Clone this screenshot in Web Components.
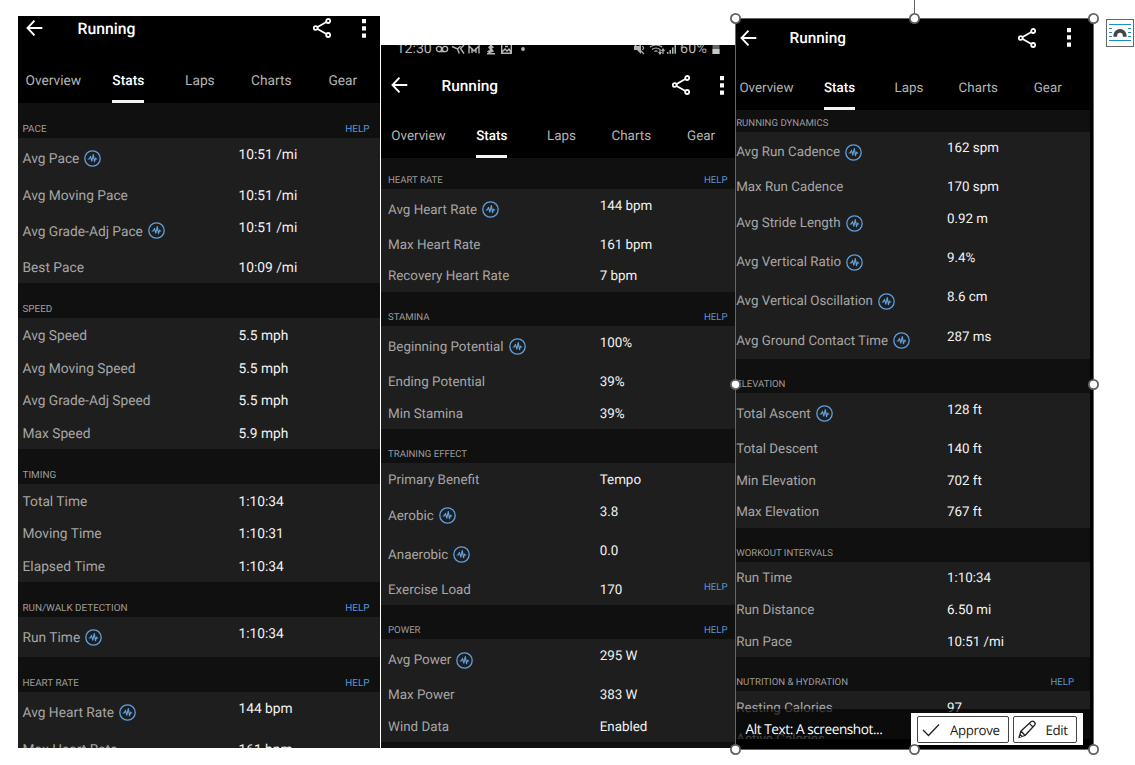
<!DOCTYPE html>
<html lang="en">
<head>
<meta charset="utf-8">
<title>Running stats</title>
<style>
body{margin:0;background:#fff;width:1135px;height:765px;overflow:hidden;font-family:Roboto,"Liberation Sans",sans-serif;text-rendering:geometricPrecision}
</style>
</head>
<body>
<document-page>
  <phone-shot class="a" style="--bar:24px;--tabs:63px;--pitch:71.5px;--tabpad:1.4px;--tb:12.5px;--dy:.9px;--pl:7.5px;--gap:35px;--dotgap:30.7px;--pr:14.5px;--lx:4.5px;--vx:220.5px;--help:10.5px;--fs:13.75px;--hs:9.9px;--plain:32.7px;--icon:40px;--head:35px;width:362px;height:732px;margin-top:16px">
    <stat-group label="PACE" help>
      <stat-row label="Avg Pace" value="10:51 /mi" tip></stat-row>
      <stat-row label="Avg Moving Pace" value="10:51 /mi"></stat-row>
      <stat-row label="Avg Grade-Adj Pace" value="10:51 /mi" tip></stat-row>
      <stat-row label="Best Pace" value="10:09 /mi"></stat-row>
    </stat-group>
    <stat-group label="SPEED">
      <stat-row label="Avg Speed" value="5.5 mph"></stat-row>
      <stat-row label="Avg Moving Speed" value="5.5 mph"></stat-row>
      <stat-row label="Avg Grade-Adj Speed" value="5.5 mph"></stat-row>
      <stat-row label="Max Speed" value="5.9 mph"></stat-row>
    </stat-group>
    <stat-group label="TIMING">
      <stat-row label="Total Time" value="1:10:34"></stat-row>
      <stat-row label="Moving Time" value="1:10:31"></stat-row>
      <stat-row label="Elapsed Time" value="1:10:34"></stat-row>
    </stat-group>
    <stat-group label="RUN/WALK DETECTION" help>
      <stat-row label="Run Time" value="1:10:34" tip></stat-row>
    </stat-group>
    <stat-group label="HEART RATE" help>
      <stat-row label="Avg Heart Rate" value="144 bpm" tip></stat-row>
      <stat-row label="Max Heart Rate" value="161 bpm"></stat-row>
    </stat-group>
  </phone-shot>
  <phone-shot class="b" style="--bar:30px;--tabs:58px;--pitch:69.8px;--tabpad:-1px;--tb:11.3px;--dy:1.3px;--pl:10px;--gap:33.5px;--dotgap:30px;--pr:11px;--lx:7px;--vx:218.7px;--help:7.5px;--fs:13.4px;--hs:9.6px;--plain:31.8px;--icon:39.2px;--head:34.3px;--first:1px;width:354px;height:703px;margin:45px 0 0 1px">
    <status-bar slot="status"></status-bar>
    <stat-group label="HEART RATE" help style="--head:31px">
      <stat-row label="Avg Heart Rate" value="144 bpm" tip></stat-row>
      <stat-row label="Max Heart Rate" value="161 bpm"></stat-row>
      <stat-row label="Recovery Heart Rate" value="7 bpm"></stat-row>
    </stat-group>
    <stat-group label="STAMINA" help>
      <stat-row label="Beginning Potential" value="100%" tip></stat-row>
      <stat-row label="Ending Potential" value="39%"></stat-row>
      <stat-row label="Min Stamina" value="39%"></stat-row>
    </stat-group>
    <stat-group label="TRAINING EFFECT">
      <stat-row label="Primary Benefit" value="Tempo"></stat-row>
      <stat-row label="Aerobic" value="3.8" tip></stat-row>
      <stat-row label="Anaerobic" value="0.0" tip></stat-row>
      <stat-row label="Exercise Load" value="170" help></stat-row>
    </stat-group>
    <stat-group label="POWER" help>
      <stat-row label="Avg Power" value="295 W" tip></stat-row>
      <stat-row label="Max Power" value="383 W"></stat-row>
      <stat-row label="Wind Data" value="Enabled"></stat-row>
    </stat-group>
  </phone-shot>
  <selection-frame>
    <phone-shot class="c" style="--bar:39px;--tabs:53px;--pitch:69.4px;--tabpad:10.6px;--tb:10.8px;--dy:1.1px;--pl:4.5px;--gap:33px;--dotgap:30.3px;--pr:22.3px;--lx:1.2px;--vx:212px;--help:16px;--fs:13.35px;--hs:9.6px;--plain:31.8px;--icon:39.1px;--head:34.1px;--edge:3px;--first:7px;width:358px;height:731px">
      <stat-group label="RUNNING DYNAMICS" style="--head:22px">
        <stat-row label="Avg Run Cadence" value="162 spm" tip></stat-row>
        <stat-row label="Max Run Cadence" value="170 spm"></stat-row>
        <stat-row label="Avg Stride Length" value="0.92 m" tip></stat-row>
        <stat-row label="Avg Vertical Ratio" value="9.4%" tip></stat-row>
        <stat-row label="Avg Vertical Oscillation" value="8.6 cm" tip></stat-row>
        <stat-row label="Avg Ground Contact Time" value="287 ms" tip></stat-row>
      </stat-group>
      <stat-group label="ELEVATION">
        <stat-row label="Total Ascent" value="128 ft" tip></stat-row>
        <stat-row label="Total Descent" value="140 ft"></stat-row>
        <stat-row label="Min Elevation" value="702 ft"></stat-row>
        <stat-row label="Max Elevation" value="767 ft"></stat-row>
      </stat-group>
      <stat-group label="WORKOUT INTERVALS">
        <stat-row label="Run Time" value="1:10:34"></stat-row>
        <stat-row label="Run Distance" value="6.50 mi"></stat-row>
        <stat-row label="Run Pace" value="10:51 /mi"></stat-row>
      </stat-group>
      <stat-group label="NUTRITION &amp; HYDRATION" help>
        <stat-row label="Resting Calories" value="97"></stat-row>
        <stat-row label="Active Calories" value="" class="cut" style="--plain:15.5px;--shift:7.5px"></stat-row>
      </stat-group>
    </phone-shot>
    <alt-text-bar slot="over"></alt-text-bar>
  </selection-frame>
  <layout-options></layout-options>
</document-page>
<script>
class Base extends HTMLElement{
  connectedCallback(){
    if(this.shadowRoot)return;
    const t=document.createElement('template');
    t.innerHTML=this.view();
    this.attachShadow({mode:'open'}).append(t.content.cloneNode(true));
  }
  esc(n){return (this.getAttribute(n)||'').replace(/&/g,'&amp;')}
}
customElements.define('document-page',class extends Base{view(){return `
<style>:host{display:flex;align-items:flex-start;width:1135px;height:765px;box-sizing:border-box;padding-left:18px;overflow:hidden;background:#fff}</style><slot></slot>`}});

customElements.define('pulse-icon',class extends Base{view(){return `
<style>:host{display:block;flex:none;width:17px;height:17px}svg{display:block}</style>
<svg width="17" height="17" viewBox="0 0 17 17" fill="none" stroke="#5f9fdc" stroke-linejoin="round" stroke-linecap="round"><circle cx="8.5" cy="8.5" r="7.7" stroke-width="1.3"/><path d="M4.2 9h1l1.3-2.6 1.3 4.8 1.5-6.6 1.2 7 1.1-3.5.5.9h.6" stroke-width="1.2"/></svg>`}});

customElements.define('stat-row',class extends Base{view(){const tip=this.hasAttribute('tip');return `
<style>
:host{display:block;box-sizing:border-box;height:var(--${tip?'icon':'plain'});font-size:var(--fs);line-height:20px;white-space:nowrap}
:host(.cut){overflow:hidden}
.r{display:grid;grid-template-columns:calc(var(--vx) - var(--lx)) 1fr auto;padding:${tip?'calc(6.3px + var(--dy))':'calc(var(--plain)/2 - 9.7px + var(--dy) + var(--shift,0px))'} var(--help) 0 var(--lx);align-items:start}
.l{display:flex;align-items:center;gap:5px;color:#a6a6a6;${tip?'padding-top:4px':''}}
pulse-icon{margin-bottom:2px}
.v{color:#f2f2f2}
.h{color:#5896d4;font-size:var(--hs);position:relative;top:-2.5px}
</style>
<div class="r"><span class="l"><span>${this.esc('label')}</span>${tip?'<pulse-icon></pulse-icon>':''}</span><span class="v">${this.esc('value')}</span>${this.hasAttribute('help')?'<span class="h">HELP</span>':''}</div>`}});

customElements.define('stat-group',class extends Base{view(){return `
<style>
:host{display:block;background:#1e1e1e}
header{display:flex;justify-content:space-between;align-items:flex-end;box-sizing:border-box;height:var(--head);padding:0 var(--help) 1px var(--lx);background:#101010;font-size:var(--hs);line-height:14px;color:#9d9d9d}
.h{color:#5896d4}
</style>
<header><span>${this.esc('label')}</span>${this.hasAttribute('help')?'<span class="h">HELP</span>':''}</header><slot></slot>`}});

customElements.define('tab-strip',class extends Base{view(){return `
<style>
:host{display:grid;grid-template-columns:1fr repeat(4,var(--pitch));height:var(--tabs);margin-right:var(--tabpad);font-size:var(--fs);line-height:20px;color:#b4b4b4;align-items:end;justify-items:center}
span{display:block;padding-bottom:var(--tb);white-space:nowrap}
.first{margin-right:var(--first,4px)}
.on{color:#fff;font-weight:500;padding-bottom:calc(var(--tb) - 3px);border-bottom:3px solid #f4f4f4}
</style>
<span class="first">Overview</span><span class="on">Stats</span><span>Laps</span><span>Charts</span><span>Gear</span>`}});

customElements.define('title-bar',class extends Base{view(){return `
<style>
:host{display:flex;align-items:center;height:var(--bar);box-sizing:border-box;padding:0 var(--pr) 0 var(--pl);color:#fff}
svg{display:block;flex:none}
.t{margin-left:var(--gap);flex:1;font-size:calc(var(--fs) + 2px);font-weight:500;line-height:20px;padding-top:1px}
.s{margin-right:var(--dotgap)}
</style>
<svg width="17" height="18" viewBox="0 0 17 18" fill="none" stroke="#fff" stroke-width="1.9"><path d="M8.5 1.7 1.5 9l7 7.3M1.7 9h14.6"/></svg>
<span class="t">Running</span>
<svg class="s" width="18" height="20" viewBox="0 0 18 20" fill="none" stroke="#fff" stroke-width="1.8"><path d="m4.6 9 8.8-5M4.6 11l8.8 5"/><circle cx="2.7" cy="10" r="1.9"/><circle cx="15.2" cy="3" r="2"/><circle cx="15.2" cy="17" r="2"/></svg>
<svg width="4" height="19" viewBox="0 0 4 19" fill="#fff"><path d="M0 0h4v4.2H0zM0 7.3h4v4.2H0zM0 14.6h4v4.2H0z"/></svg>`}});

customElements.define('status-bar',class extends Base{view(){return `
<style>
:host{display:flex;height:25px;align-items:flex-start;overflow:hidden;color:#b5b5b5;font-size:14.2px;line-height:16px;padding:0 15.5px 0 15.5px}
.x{margin-top:-4px}.sp{flex:1}
.c{width:34px}.p{width:31px;letter-spacing:.3px}
svg{display:block;flex:none}
</style>
<span class="x c">12:30</span>
<svg style="margin-left:4.5px" width="92" height="10" viewBox="0 0 92 10" fill="none" stroke="#b5b5b5" stroke-width="1.4"><circle cx="4" cy="4" r="2.6"/><circle cx="10" cy="4" r="2.6"/><path d="M4 6.6h6M17 1.5l5.5 2.500 3-3M22.500 4l1.800 4.500M29 0l-3.500 3.500L29 8.700M34 8.500V1l5 5 5-5v7.500M37 8V3m4 5V3M52 8.700h8"/><path d="M56-1l3 3.500-2 1 2 3-5 2-2-2 3-2-2-2z" fill="#b5b5b5" stroke="none"/><path d="M66.700-2v10.300h9.600V-2M67 7l3-3 2 2 2-2 2 3M70 1.500h3"/><circle cx="88" cy="4" r="1.900" fill="#b5b5b5" stroke="none"/></svg>
<span class="sp"></span>
<svg width="47" height="10" viewBox="0 0 47 10" fill="none" stroke="#b5b5b5" stroke-width="1.200"><path d="M1 1v4h3l4 4V0L5 1z" fill="#b5b5b5" stroke="none"/><path d="m1-1 10 10M9.500 1l1.200 2-1.200 2M17 2q6-4 12 0M19 4.500q4-3 8 0M21.500 6.500q1.500-1.200 3 0M27 4v5m-1.500-2L27 9l1.500-2M30 9V4m-1.500 2L30 4l1.500 2"/><path d="M34 8.800V7h1.500v1.800zM36.500 8.800V5H38v3.800zM39 8.800V2.500h1.500v6.300zM41.500 8.800V0H43v8.800z" fill="#b5b5b5" stroke="none"/></svg>
<span class="x p">60%</span>
<svg style="margin-left:.5px" width="8" height="10" viewBox="0 0 8 10"><path d="M.5 0h7v9h-7z" fill="#666"/><path d="M.5 4h7v5h-7z" fill="#c8c8c8"/></svg>`}});

customElements.define('phone-shot',class extends Base{view(){return `
<style>
:host{display:block;flex:none;background:#000;overflow:hidden;box-sizing:border-box}
.end{height:30px;background:#101010}
main{margin-right:var(--edge,0px)}
</style>
<slot name="status"></slot><title-bar></title-bar><tab-strip></tab-strip><main><slot></slot>${this.className==='b'?'<div class="end"></div>':''}</main>`}});

customElements.define('alt-text-bar',class extends Base{view(){return `
<style>
:host{display:flex;align-items:center;justify-content:space-between;height:40px;box-sizing:border-box;padding:0 10px 0 9.5px;background:rgba(0,0,0,.62);color:#fff;font:13.6px/20px "Open Sans","Noto Sans",sans-serif}
.t{letter-spacing:-.42px}
.b{display:flex;gap:4px;background:#fff;padding:3px 6px;height:32px;width:172px;box-sizing:border-box}
button{all:unset;box-sizing:border-box;display:flex;align-items:center;border:1.5px solid #444;border-radius:2px;height:27px;color:#222;font-size:13.3px;letter-spacing:-.38px}
.ap{width:92px;padding-left:4px;gap:10px}.ed{width:64px;padding-left:4px;gap:8.5px}
svg{display:block;flex:none}
</style>
<span class="t">Alt Text: A screenshot...</span>
<div class="b"><button class="ap"><svg width="18" height="14" viewBox="0 0 18 14" fill="none" stroke="#222" stroke-width="1.3"><path d="m1 7 5.5 5.5L17 1.5"/></svg>Approve</button><button class="ed"><svg width="19" height="19" viewBox="0 0 19 19" fill="none" stroke="#222" stroke-width="1.3" stroke-linejoin="round"><path d="m1 17.5 2-6.5L13 1.8q1.6-1.4 3.3.2 1.6 1.7.2 3.3L7 15.5zM11.3 3.4l3.800 3.700M3 11l4 4.500M2 14.500l2 2"/></svg>Edit</button></div>`}});

customElements.define('selection-frame',class extends Base{view(){
const pts=[[0,0],[179,0],[358,0],[0,366],[358,366],[0,731],[179,731],[358,731]];
return `
<style>
:host{display:block;position:relative;width:358px;height:731px;margin-top:18px;flex:none}
.over{position:absolute;left:1px;right:0;bottom:0}
.f{position:absolute;left:0;top:0;width:357px;height:730px;border:1px solid #666}
svg{position:absolute;left:-10px;top:-18px;overflow:visible}
</style>
<slot></slot><div class="over"><slot name="over"></slot></div><div class="f"></div>
<svg width="380" height="765" viewBox="-10 -18 380 765" fill="#fff" stroke="#616161"><path d="M179.5-18v14"/>${pts.map(p=>`<circle cx="${p[0]+.5}" cy="${p[1]+.5}" r="4.6" stroke-width="1.8"/>`).join('')}</svg>`}});

customElements.define('layout-options',class extends Base{view(){return `
<style>:host{display:block;margin:19px 0 0 13px;flex:none}svg{display:block}</style>
<svg width="28" height="28" viewBox="0 0 28 28" fill="none"><rect x=".5" y=".5" width="27" height="27" fill="#fff" stroke="#666"/><path d="M3 5.5h22M3 9.5h3m16 0h3M3 13.5h3m16 0h3M3 17.5h3m16 0h3M3 21.5h22" stroke="#1e8bcd"/><path d="M9.5 18v-1.2a4.700 4.700 0 0 1 9.400 0V18" stroke="#444" stroke-width="3.8" transform="translate(-.2 -.2)"/></svg>`}});
</script>
</body>
</html>
